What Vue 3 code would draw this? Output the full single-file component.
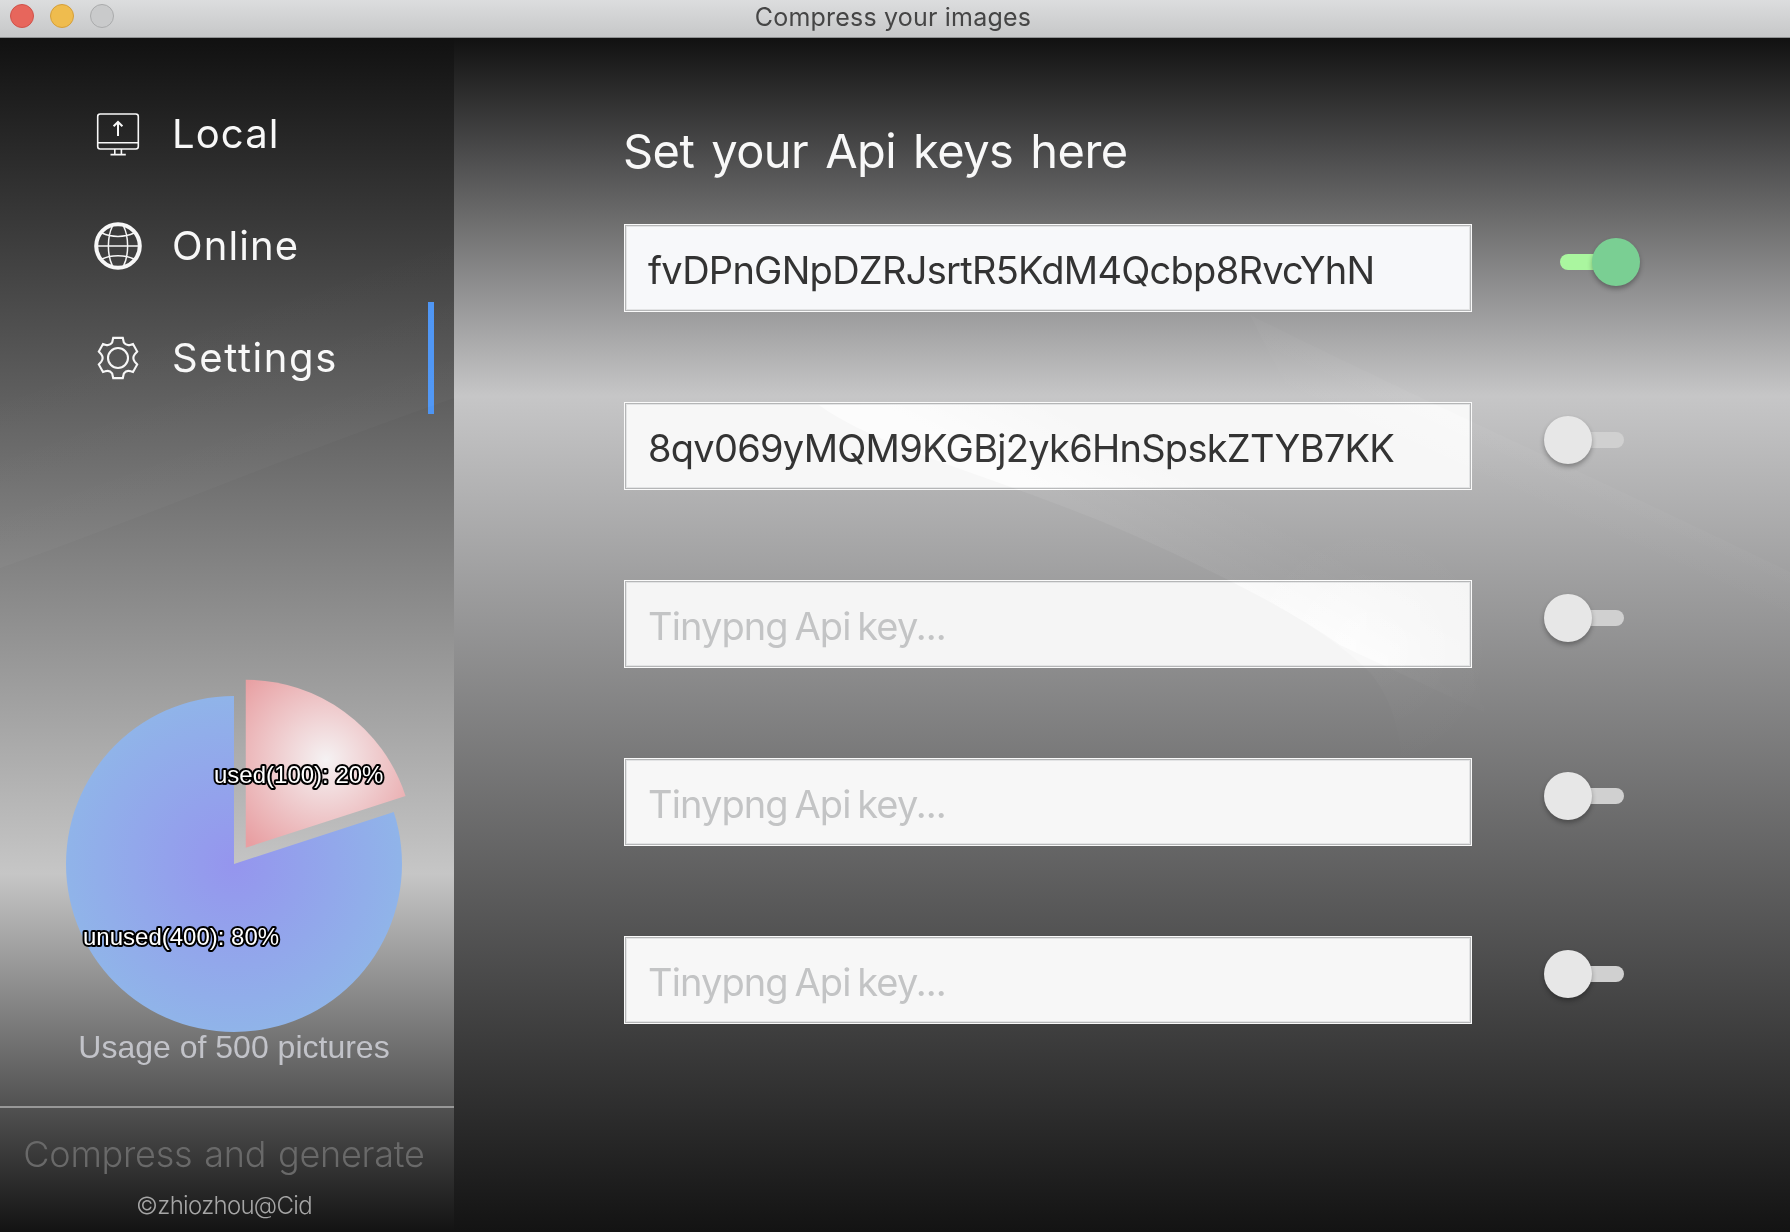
<script setup>
const nav = [
  { name: 'Local', icon: 'local' },
  { name: 'Online', icon: 'online' },
  { name: 'Settings', icon: 'settings' },
]
const active = 'Settings'
const keys = [
  { value: 'fvDPnGNpDZRJsrtR5KdM4Qcbp8RvcYhN', on: true, tone: 'cool' },
  { value: '8qv069yMQM9KGBj2yk6HnSpskZTYB7KK', on: false, tone: 'plain' },
  { value: '', on: false, tone: 'dim' },
  { value: '', on: false, tone: 'plain' },
  { value: '', on: false, tone: 'plain' },
]
</script>

<template>
  <div class="window">
    <header class="titlebar">
      <div class="lights"><i class="close"></i><i class="min"></i><i class="max"></i></div>
      <span class="title">Compress your images</span>
    </header>
    <div class="body">
      <aside class="sidebar">
        <nav>
          <div v-for="n in nav" :key="n.name" class="item" :class="{ active: n.name === active }">
            <svg class="icon" viewBox="0 0 48 48" fill="none" stroke="#f7f7f7" stroke-width="1.6">
              <g v-if="n.icon === 'local'">
                <rect x="3.7" y="4" width="40.6" height="35" rx="2.5" />
                <path d="M3.7 32.8H44.3M20.8 39v5M27.4 39v5M16.5 44.6H31.8" />
                <path d="M24 26V13M19.6 16.2L24 12l4.4 4.2" stroke-width="2" />
              </g>
              <g v-else-if="n.icon === 'online'" stroke-width="1.5">
                <circle cx="24" cy="24" r="21.8" stroke-width="4" />
                <path d="M3 24H45M18.500 4C13 15 13 33 18.500 44M29.500 4C35 15 35 33 29.500 44M8 11C17 15.500 31 15.500 40 11M8 37C17 32.500 31 32.500 40 37" />
              </g>
              <g v-else stroke-width="2.1">
                <circle cx="24" cy="24" r="10" />
                <path d="M19.2 3.900H28.800L29.900 8.700Q32.500 12.300 36.800 10.700L39 10L43.200 17.500L40.700 20.400Q38 24 40.700 27.600L43.200 30.500L39 38L36.800 37.300Q32.500 35.700 29.900 39.300L28.800 44.100H19.200L18.100 39.300Q15.500 35.700 11.200 37.300L9 38L4.800 30.500L7.300 27.600Q10 24 7.300 20.400L4.800 17.500L9 10L11.200 10.700Q15.500 12.300 18.100 8.700Z" />
              </g>
            </svg>
            <span class="label">{{ n.name }}</span>
          </div>
        </nav>
        <svg class="chart" viewBox="0 640 454 466">
          <defs>
            <radialGradient id="blue" gradientUnits="userSpaceOnUse" cx="234" cy="864" r="168">
              <stop offset="0" stop-color="#9595ee" />
              <stop offset="1" stop-color="#90b4e9" />
            </radialGradient>
            <radialGradient id="red" gradientUnits="userSpaceOnUse" cx="326" cy="760" r="112">
              <stop offset="0" stop-color="#f5f2f3" />
              <stop offset="1" stop-color="#e89fa2" />
            </radialGradient>
          </defs>
          <path d="M234 864V696A168 168 0 1 0 393.780 812.090Z" fill="url(#blue)" />
          <path d="M245.760 847.800V679.800A168 168 0 0 1 405.540 795.900Z" fill="url(#red)" />
          <g class="lbl">
            <text x="214" y="783">used(100): 20%</text>
            <text x="83" y="945">unused(400): 80%</text>
          </g>
          <text class="usage" x="234" y="1058" text-anchor="middle">Usage of 500 pictures</text>
        </svg>
        <footer>
          <div class="compress">Compress and generate</div>
          <div class="copy">©zhiozhou@Cid</div>
        </footer>
      </aside>
      <main class="main">
        <h1>Set your Api keys here</h1>
        <div v-for="(k, i) in keys" :key="i" class="row">
          <div class="input" :class="k.tone">
            <span v-if="k.value" class="value">{{ k.value }}</span>
            <span v-else class="ph">Tinypng Api key...</span>
          </div>
          <div class="switch" :class="{ on: k.on }"><i></i></div>
        </div>
      </main>
    </div>
    <!-- faint light sweeps across the metallic background -->
    <svg class="glare" viewBox="0 0 1790 1232">
      <defs>
        <linearGradient id="streak" gradientUnits="userSpaceOnUse" x1="1210" y1="575" x2="1246" y2="505">
          <stop offset="0" stop-color="#fff" stop-opacity="0.02" />
          <stop offset="1" stop-color="#fff" stop-opacity="0" />
        </linearGradient>
        <radialGradient id="flare" gradientUnits="userSpaceOnUse" cx="1370" cy="650" r="130">
          <stop offset="0" stop-color="#fff" stop-opacity="0.014" />
          <stop offset="1" stop-color="#fff" stop-opacity="0" />
        </radialGradient>
        <linearGradient id="sweep" gradientUnits="userSpaceOnUse" x1="190" y1="500" x2="130" y2="330">
          <stop offset="0" stop-color="#fff" stop-opacity="0.013" />
          <stop offset="1" stop-color="#fff" stop-opacity="0" />
        </linearGradient>
        <linearGradient id="ridge" gradientUnits="userSpaceOnUse" x1="1480" y1="420" x2="1455" y2="475">
          <stop offset="0" stop-color="#fff" stop-opacity="0.009" />
          <stop offset="1" stop-color="#fff" stop-opacity="0" />
        </linearGradient>
        <linearGradient id="fade" gradientUnits="userSpaceOnUse" x1="1340" y1="0" x2="1500" y2="0">
          <stop offset="0" stop-color="#fff" />
          <stop offset="1" stop-color="#000" />
        </linearGradient>
        <mask id="tail" maskUnits="userSpaceOnUse" x="0" y="0" width="1790" height="1232">
          <rect width="1790" height="1232" fill="url(#fade)" />
        </mask>
      </defs>
      <path d="M819 405C880 450 1010 480 1140 538C1220 574 1290 610 1340 645L1500 720V400Z" fill="url(#streak)" mask="url(#tail)" />
      <path d="M1140 538C1260 590 1340 640 1372 675C1400 710 1405 760 1400 790H1560V500Z" fill="url(#flare)" />
      <path d="M0 568C150 515 290 455 454 398V220H0Z" fill="url(#sweep)" />
      <path d="M1250 315C1400 390 1600 480 1790 572V700L1330 470Z" fill="url(#ridge)" />
    </svg>
  </div>
</template>

<style>
body { margin: 0; overflow: hidden; }
</style>
<style scoped>
.window { position: relative; width: 1790px; height: 1232px; display: flex; flex-direction: column; font-family: Inter, "Liberation Sans", sans-serif; overflow: hidden; }
.glare { position: absolute; left: 0; top: 0; width: 1790px; height: 1232px; pointer-events: none; mix-blend-mode: plus-lighter; }
.titlebar { height: 38px; box-sizing: border-box; display: flex; align-items: center; background: linear-gradient(#dcddde, #c6c7c8); border-bottom: 1px solid #8f9192; }
.lights { display: flex; gap: 16px; padding: 0 0 5px 10px; }
.lights i { width: 24px; height: 24px; border-radius: 50%; box-sizing: border-box; }
.close { background: #e7665c; border: 1px solid #d0524a; }
.min { background: #efbc4e; border: 1px solid #d59f3a; }
.max { background: #c9cacb; border: 1px solid #aaabac; }
.title { flex: 1; text-align: center; padding: 0 118px 4px 0; font-size: 25px; line-height: 30px; color: #454545; letter-spacing: 0.2px; }
.body { flex: 1; display: flex; }
.sidebar { width: 454px; display: flex; flex-direction: column; background: linear-gradient(#111, #c6c6c6 70%, #131313); }
nav { padding-top: 40px; height: 562px; }
.item { height: 112px; box-sizing: border-box; padding: 0 20px 0 94px; display: flex; align-items: center; }
.item.active::after { content: ""; width: 6px; height: 112px; background: #4e95f3; margin-left: auto; }
.icon { width: 48px; height: 48px; }
.label { margin-left: 30px; font-size: 40px; line-height: 48px; font-weight: 400; letter-spacing: 1.1px; color: #f7f7f7; }
.active .label { letter-spacing: 1.6px; }
.chart { display: block; width: 454px; height: 466px; flex: none; font-family: "Liberation Sans", Arial, sans-serif; }
.lbl text { font-size: 24px; fill: #fff; stroke: #000; stroke-width: 4px; stroke-linejoin: round; paint-order: stroke; }
.usage { font-size: 32px; fill: #c2c3c9; }
footer { border-top: 2px solid #989898; flex: 1; text-align: center; }
.compress { margin-top: 24px; margin-right: 6px; font-size: 36px; line-height: 44px; font-weight: 300; color: #696969; letter-spacing: -0.25px; word-spacing: 2px; white-space: nowrap; }
.copy { margin-top: 16px; margin-right: 6px; font-size: 24px; line-height: 28px; font-weight: 300; color: #a6a6a6; letter-spacing: -0.7px; }
.main { flex: 1; padding: 78px 0 0 170px; background: linear-gradient(#111, #c6c6c7 30%, #131313); }
h1 { margin: 0 0 0 -1px; height: 108px; font-size: 47px; line-height: 70px; font-weight: 400; letter-spacing: -0.55px; word-spacing: 4.3px; color: #f8f8f8; white-space: nowrap; }
.row { display: flex; height: 88px; margin-bottom: 90px; }
.input { width: 848px; height: 88px; box-sizing: border-box; border: 1px solid #fafafa; box-shadow: inset 0 0 0 1px #b5b6b7, inset 0 0 0 2px #e3e4e5; background: #f7f7f7; padding: 4px 0 0 23px; line-height: 82px; font-size: 38px; white-space: nowrap; color: #333; }
.input.cool { background: #f7f8fa; }
.input.dim { background: #f5f5f5; }
.value { letter-spacing: -0.73px; }
.ph { color: #c3c4c5; letter-spacing: -0.9px; word-spacing: -3px; }
.switch { margin: 30px 0 0 88px; width: 64px; height: 16px; border-radius: 8px; background: #d0d0d0; display: flex; align-items: center; }
.switch i { flex: none; width: 48px; height: 48px; border-radius: 50%; background: #e7e7e7; margin-left: -16px; box-shadow: 0 3px 5px rgba(0, 0, 0, 0.3); }
.switch.on { background: #aaf69f; }
.switch.on i { background: #7acf93; margin-left: 32px; }
</style>
